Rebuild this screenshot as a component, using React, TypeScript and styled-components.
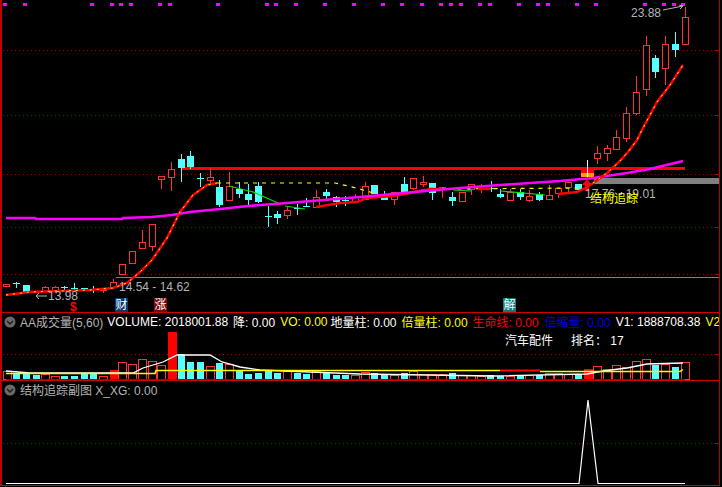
import styled, { createGlobalStyle } from 'styled-components';

type Candle = [number, number, number, number, number, 'r' | 'c'];

// x, box top, box bottom, wick top, wick bottom, colour
const candles: Candle[] = [
  [6, 284, 287, 284, 287, 'r'], [16, 283, 284, 282, 288, 'c'], [26, 285, 292, 285, 292, 'c'],
  [45, 287, 292, 286, 292, 'r'], [55, 287, 291, 286, 291, 'r'], [64, 287, 288, 286, 292, 'c'],
  [74, 288, 289, 283, 292, 'c'], [84, 288, 289, 288, 289, 'c'], [93, 289, 290, 286, 293, 'c'],
  [103, 288, 291, 288, 293, 'r'], [113, 282, 288, 279, 289, 'r'], [122, 264, 275, 264, 275, 'r'],
  [132, 251, 264, 251, 264, 'r'], [142, 242, 249, 230, 249, 'r'], [152, 224, 247, 224, 251, 'r'],
  [161, 176, 180, 176, 189, 'r'], [171, 169, 178, 162, 191, 'r'], [181, 159, 168, 154, 182, 'c'],
  [190, 156, 167, 151, 169, 'c'], [200, 178, 179, 173, 187, 'c'], [210, 177, 181, 168, 183, 'r'],
  [219, 187, 205, 180, 207, 'c'], [229, 186, 201, 172, 201, 'r'], [239, 189, 194, 182, 198, 'c'],
  [248, 194, 200, 184, 205, 'c'], [258, 186, 202, 182, 203, 'c'], [268, 216, 217, 206, 227, 'c'],
  [277, 214, 218, 211, 224, 'c'], [287, 210, 216, 207, 219, 'r'], [297, 208, 209, 204, 215, 'c'],
  [306, 206, 207, 198, 207, 'c'], [316, 197, 208, 190, 208, 'r'], [326, 192, 196, 189, 200, 'c'],
  [336, 197, 202, 196, 207, 'c'], [345, 200, 201, 196, 206, 'c'], [355, 197, 202, 194, 202, 'r'],
  [365, 186, 200, 182, 200, 'r'], [374, 185, 194, 185, 194, 'c'], [384, 197, 200, 191, 200, 'c'],
  [394, 192, 200, 192, 205, 'r'], [404, 184, 192, 177, 192, 'c'], [413, 178, 189, 178, 190, 'r'],
  [423, 182, 185, 176, 187, 'r'], [432, 183, 193, 183, 200, 'c'], [442, 187, 189, 187, 198, 'r'],
  [452, 197, 201, 192, 206, 'c'], [462, 192, 202, 192, 202, 'r'], [471, 184, 190, 184, 195, 'r'],
  [481, 188, 190, 184, 193, 'r'], [491, 188, 189, 181, 192, 'c'], [500, 194, 197, 189, 198, 'c'],
  [510, 192, 201, 189, 201, 'r'], [520, 192, 197, 189, 200, 'c'], [529, 196, 201, 190, 202, 'r'],
  [539, 194, 200, 192, 201, 'c'], [549, 195, 200, 185, 200, 'r'], [558, 188, 194, 188, 198, 'r'],
  [568, 182, 188, 182, 193, 'r'], [578, 184, 190, 184, 190, 'c'], [597, 153, 159, 146, 164, 'r'],
  [607, 148, 154, 145, 161, 'r'], [616, 137, 150, 130, 150, 'r'], [626, 113, 139, 107, 142, 'r'],
  [636, 92, 114, 76, 115, 'r'], [646, 45, 90, 36, 96, 'r'], [655, 58, 72, 55, 78, 'c'],
  [665, 44, 69, 36, 85, 'r'], [675, 44, 50, 32, 57, 'c'], [685, 17, 45, 7, 45, 'r'],
];

// x, top, colour (s = solid red)
const bars: [number, number, 'r' | 'c' | 's'][] = [
  [7, 371, 'r'], [16, 373, 'c'], [26, 373, 'c'], [36, 375, 'c'], [45, 374, 'r'], [55, 376, 'r'],
  [64, 376, 'c'], [74, 376, 'c'], [84, 374, 'c'], [93, 374, 'c'], [103, 376, 'r'], [113, 370, 's'],
  [122, 362, 'r'], [132, 364, 'r'], [142, 359, 'r'], [152, 361, 'r'], [161, 365, 'r'], [171, 332, 's'],
  [181, 354, 'c'], [190, 362, 'c'], [200, 362, 'c'], [210, 366, 'r'], [219, 363, 'c'], [229, 364, 'r'],
  [239, 371, 'c'], [248, 374, 'c'], [258, 373, 'c'], [268, 371, 'c'], [277, 373, 'c'], [287, 371, 'r'],
  [297, 373, 'c'], [306, 374, 'c'], [316, 371, 'r'], [326, 373, 'c'], [336, 375, 'c'], [345, 375, 'c'],
  [355, 375, 'r'], [365, 372, 'r'], [374, 373, 'c'], [384, 375, 'c'], [394, 375, 'r'], [404, 373, 'c'],
  [413, 371, 'r'], [423, 374, 'r'], [432, 374, 'r'], [442, 374, 'r'], [452, 373, 'c'], [462, 375, 'r'],
  [471, 375, 'r'], [481, 376, 'r'], [490, 375, 'c'], [500, 376, 'c'], [510, 376, 'r'], [520, 375, 'c'],
  [529, 375, 'r'], [539, 375, 'c'], [549, 373, 'r'], [558, 373, 'r'], [568, 374, 'r'], [578, 374, 'c'],
  [587, 369, 's'], [597, 366, 'r'], [607, 369, 'r'], [616, 365, 'r'], [626, 367, 'r'], [636, 361, 'r'],
  [646, 359, 'r'], [655, 365, 'c'], [665, 364, 'r'], [675, 367, 'c'], [685, 362, 'r'],
];

const topDots = [
  5, 25, 92, 112, 121, 131, 160, 170, 218, 267, 276, 296, 325, 354, 383, 402, 422, 441, 451, 461,
  480, 490, 519, 538, 548, 577, 596, 645, 664, 674, 683,
];

const fastLeft = '6,295 30,292 60,291 90,290 113,288 127,283 140,272 152,260 167,238 180,212 193,195 207,185 217,183';
const fastRight = '587,187 593,183 607,173 618,163 628,152 637,140 643,128 657,102 670,85 683,65';
const slowLine = '316,207 340,203 357,202 367,198 393,196 410,193 430,189 442,189';
const slowRight = '558,194 577,192 587,187';
const dashedLine = '217,183 335,183 348,186 360,189 370,192 380,195 393,196 403,195 420,190 440,189 580,188';
const greenLines = [
  '229,186 253,192 278,203',
  '285,206 305,209',
  '453,190 472,191',
  '500,191 545,195',
];
const magentaLine = '6,218 35,218 36,219 122,219 123,218 152,217 172,215 190,212 220,209 248,206 287,203 360,197 403,193 460,188 500,185 560,181 593,178 627,173 650,169 683,161';
const volumeWhite = '6,371 30,373 117,373 133,373 143,368 163,362 177,355 210,355 222,362 240,367 260,370 360,374 493,376 587,374 603,371 627,368 647,364 683,363';

const GlobalStyle = createGlobalStyle`
  html, body {
    margin: 0;
    background: #000;
  }
`;

const Screen = styled.div`
  width: 722px;
  height: 487px;
  background: #000;
  overflow: hidden;
  font-family: 'Liberation Sans', 'Noto Sans CJK SC', sans-serif;
  font-size: 12px;
`;

const Frame = styled.div`
  width: 720px;
  height: 486px;
  box-sizing: border-box;
  border-left: 2px solid #c00000;
  border-right: 1px solid #c00000;
  display: flex;
  flex-direction: column;
`;

const Pane = styled.section<{ $height: number }>`
  position: relative;
  flex: none;
  box-sizing: border-box;
  height: ${({ $height }) => $height}px;
  border-bottom: 1px solid #d00000;
  overflow: hidden;
`;

const Chart = styled.svg`
  display: block;
  width: 717px;
  height: 100%;
`;

const Overlay = styled.div`
  position: absolute;
  top: 0;
  left: 0;
  right: 0;
`;

const LegendRow = styled.div`
  height: 17px;
  display: flex;
  align-items: center;
  gap: 5px;
  padding-left: 2px;
  white-space: nowrap;
`;

const CollapseIcon = styled.svg`
  flex: none;
  width: 12px;
  height: 12px;
  margin-right: -1px;
`;

const LegendItem = styled.span<{ $color: string; $nudge?: number }>`
  flex: none;
  margin-left: ${({ $nudge }) => $nudge || 0}px;
  color: ${({ $color }) => $color};
`;

const InfoRow = styled.div`
  height: 18px;
  display: flex;
  align-items: center;
  gap: 18px;
  padding-left: 503px;
  color: #fff;
`;

const PriceLabel = styled.text<{ $color?: string }>`
  font-family: 'Liberation Sans', 'Noto Sans CJK SC', sans-serif;
  font-size: 12px;
  fill: ${({ $color }) => $color || '#b4b4b4'};
`;

const Tag = styled.span<{ $bg: string; $left: number }>`
  position: absolute;
  top: 298px;
  left: ${({ $left }) => $left}px;
  width: 13px;
  height: 14px;
  line-height: 14px;
  text-align: center;
  color: #fff;
  background: ${({ $bg }) => $bg};
`;

const Signal = styled.span`
  position: absolute;
  top: 302px;
  left: 68px;
  color: #ff0000;
  font-weight: 700;
  line-height: 10px;
`;

const Collapse = () => (
  <CollapseIcon viewBox="0 0 12 12">
    <circle cx="6" cy="6" r="5.5" fill="#6a6a6a" />
    <path d="M3 5l3 3 3-3" fill="none" stroke="#1c1c1c" strokeWidth="1.4" />
  </CollapseIcon>
);

const Dotted = ({ y }: { y: number }) => (
  <g>
    <line x1="3" x2="719" y1={y + 0.5} y2={y + 0.5} stroke="#a80000" strokeDasharray="1 3" />
    <line x1="716" x2="719" y1={y + 0.5} y2={y + 0.5} stroke="#c00000" />
  </g>
);

const CandleMark = ({ c }: { c: Candle }) => {
  const [x, top, bottom, wickTop, wickBottom, kind] = c;
  const color = kind === 'r' ? '#ff3232' : '#54ffff';
  const thin = bottom - top <= 1;
  return (
    <g shapeRendering="crispEdges">
      <line x1={x + 0.5} x2={x + 0.5} y1={wickTop} y2={wickBottom} stroke={color} />
      {thin ? (
        <line x1={x - 3} x2={x + 4} y1={top + 0.5} y2={top + 0.5} stroke={color} />
      ) : kind === 'r' ? (
        <rect x={x - 2.5} y={top + 0.5} width={6} height={bottom - top - 1} fill="#000" stroke={color} />
      ) : (
        <rect x={x - 3} y={top} width={7} height={bottom - top} fill={color} />
      )}
    </g>
  );
};

const MainChart = () => (
  <Chart viewBox="2 0 717 312">
    {[50, 115, 174, 227, 274].map((y) => (
      <Dotted key={y} y={y} />
    ))}
    <line x1="116" x2="719" y1="277.5" y2="277.5" stroke="#808080" />
    <rect x="594" y="178" width="125" height="6" fill="#808080" />
    {topDots.map((x) => (
      <rect key={x} x={x - 2} y="3" width="4" height="3" fill="#ff00ff" />
    ))}
    <rect x="182" y="167" width="503" height="3" fill="#ff0000" />
    {candles.map((c) => (
      <CandleMark key={c[0]} c={c} />
    ))}
    <rect x="581" y="168" width="13" height="5" fill="#ff0000" />
    <rect x="581" y="173" width="13" height="4" fill="#ffa000" />
    <line x1="587.5" x2="587.5" y1="160" y2="177" stroke="#fff" />
    <polyline points={dashedLine} fill="none" stroke="#ffff00" strokeWidth="1.2" strokeDasharray="4 5" />
    {greenLines.map((p) => (
      <polyline key={p} points={p} fill="none" stroke="#00e000" strokeWidth="1.2" />
    ))}
    <polyline points={slowLine} fill="none" stroke="#ff0000" strokeWidth="2.4" />
    <polyline points={slowRight} fill="none" stroke="#ff0000" strokeWidth="2.4" />
    <polyline points="478,189 491,189" fill="none" stroke="#ff0000" strokeWidth="2.4" />
    <polyline points={magentaLine} fill="none" stroke="#ff00ff" strokeWidth="2.6" />
    {[fastLeft, fastRight].map((p) => (
      <g key={p} fill="none">
        <polyline points={p} stroke="#ff0000" strokeWidth="2.4" />
        <polyline points={p} stroke="#ffff00" strokeWidth="1" strokeDasharray="2 5" />
      </g>
    ))}
    <path d="M587 179l5 6h-3v6h-4v-6h-3z" fill="#ff0000" />
    <PriceLabel x="119" y="291">14.54 - 14.62</PriceLabel>
    <PriceLabel x="48" y="300">13.98</PriceLabel>
    <path d="M47 296h-11m3-3l-3 3 3 3" fill="none" stroke="#b4b4b4" />
    <PriceLabel x="631" y="17">23.88</PriceLabel>
    <path d="M663 10l20-4m-4-1l4 1-3 3" fill="none" stroke="#b4b4b4" />
    <PriceLabel x="585" y="198">17.76 - 19.01</PriceLabel>
    <PriceLabel x="590" y="203" $color="#ffff00">结构追踪</PriceLabel>
  </Chart>
);

const VolumeChart = () => (
  <Chart viewBox="2 313 717 67">
    <Dotted y={354} />
    <g shapeRendering="crispEdges">
      {bars.map(([x, top, kind]) =>
        kind === 'r' ? (
          <rect key={x} x={x - 3.5} y={top + 0.5} width={8} height={379 - top} fill="#000" stroke="#ff3232" />
        ) : (
          <rect key={x} x={x - 3} y={top} width={kind === 's' ? 9 : 7} height={379 - top} fill={kind === 's' ? '#ff0000' : '#54ffff'} />
        ),
      )}
    </g>
    <polyline points={volumeWhite} fill="none" stroke="#fff" strokeWidth="1.3" />
    <polyline points="6,373.5 155,373.5 156,370.5 500,370.5" fill="none" stroke="#ffff00" strokeWidth="1.5" />
    <polyline points="500,370.5 540,370.5" fill="none" stroke="#ff0000" strokeWidth="2" />
    <polyline points="540,371.5 680,371.5 683,369.5" fill="none" stroke="#ffff00" strokeWidth="1.5" />
    <line x1="6" x2="685" y1="379.5" y2="379.5" stroke="#2020d0" />
  </Chart>
);

const SubChart = () => (
  <Chart viewBox="2 381 717 104">
    <Dotted y={443} />
    <polyline points="6,483.5 579,483.5 588,400 598,483.5 685,483.5" fill="none" stroke="#fff" strokeWidth="1.2" />
  </Chart>
);

const App = () => (
  <Screen>
    <GlobalStyle />
    <Frame>
      <Pane $height={313}>
        <MainChart />
        <Signal>$</Signal>
        <Tag $bg="#0a3a6e" $left={113}>财</Tag>
        <Tag $bg="#7a0a0a" $left={152}>涨</Tag>
        <Tag $bg="#0a7a7a" $left={501}>解</Tag>
      </Pane>
      <Pane $height={68}>
        <VolumeChart />
        <Overlay>
          <LegendRow>
            <Collapse />
            <LegendItem $color="#b4b4b4">AA成交量(5,60)</LegendItem>
            <LegendItem $color="#fff" $nudge={-1}>VOLUME: 2018001.88</LegendItem>
            <LegendItem $color="#fff">降: 0.00</LegendItem>
            <LegendItem $color="#ffff00">VO: 0.00</LegendItem>
            <LegendItem $color="#fff" $nudge={-2}>地量柱: 0.00</LegendItem>
            <LegendItem $color="#ffff00">倍量柱: 0.00</LegendItem>
            <LegendItem $color="#ff0000">生命线: 0.00</LegendItem>
            <LegendItem $color="#0000e0" $nudge={1}>倍缩量: 0.00</LegendItem>
            <LegendItem $color="#fff">V1: 1888708.38</LegendItem>
            <LegendItem $color="#ffff00">V2</LegendItem>
          </LegendRow>
          <InfoRow>
            <span>汽车配件</span>
            <span>排名： 17</span>
          </InfoRow>
        </Overlay>
      </Pane>
      <Pane $height={105}>
        <SubChart />
        <Overlay>
          <LegendRow>
            <Collapse />
            <LegendItem $color="#b4b4b4">结构追踪副图 X_XG: 0.00</LegendItem>
          </LegendRow>
        </Overlay>
      </Pane>
    </Frame>
  </Screen>
);

export default App;
